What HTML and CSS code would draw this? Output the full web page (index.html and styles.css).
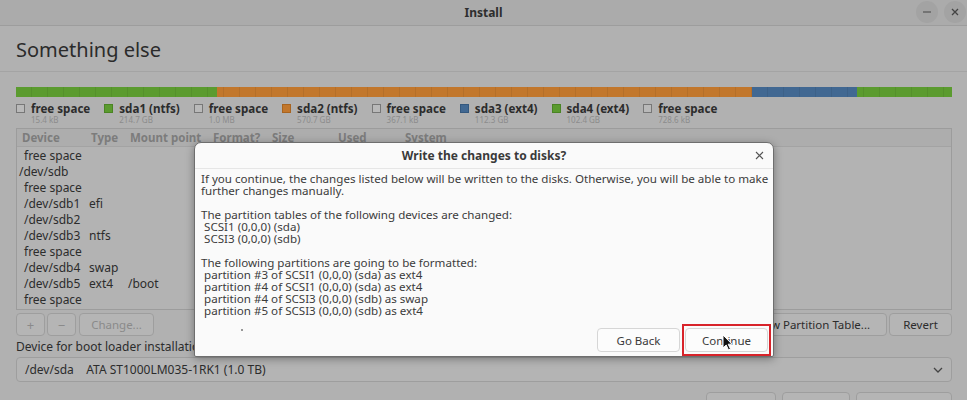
FILE: index.html
```html
<!DOCTYPE html>
<html>
<head>
<meta charset="utf-8">
<link rel="stylesheet" href="styles.css">
</head>
<body>
<div class="window">
  <header class="titlebar">
    <span class="title">Install</span>
    <div class="wm">
      <span class="wm-btn"><svg width="10" height="10" viewBox="0 0 10 10"><path d="M1 5h8" stroke="#555" stroke-width="1.2"/></svg></span>
      <span class="wm-btn"><svg width="10" height="10" viewBox="0 0 10 10"><path d="M2 2l6 6M8 2l-6 6" stroke="#444" stroke-width="1.3"/></svg></span>
    </div>
  </header>
  <div class="heading">Something else</div>
  <div class="content">
    <div class="partbar">
      <span class="seg green" style="width:201px"></span>
      <span class="seg orange" style="width:535px"></span>
      <span class="seg blue" style="width:105px"></span>
      <span class="seg green" style="flex:1"></span>
    </div>
    <div class="legend">
      <div class="lg"><span class="sq free"></span><div><div class="lg-name">free space</div><div class="lg-size">15.4 kB</div></div></div>
      <div class="lg"><span class="sq green"></span><div><div class="lg-name">sda1 (ntfs)</div><div class="lg-size">214.7 GB</div></div></div>
      <div class="lg"><span class="sq free"></span><div><div class="lg-name">free space</div><div class="lg-size">1.0 MB</div></div></div>
      <div class="lg"><span class="sq orange"></span><div><div class="lg-name">sda2 (ntfs)</div><div class="lg-size">570.7 GB</div></div></div>
      <div class="lg"><span class="sq free"></span><div><div class="lg-name">free space</div><div class="lg-size">367.1 kB</div></div></div>
      <div class="lg"><span class="sq blue"></span><div><div class="lg-name">sda3 (ext4)</div><div class="lg-size">112.3 GB</div></div></div>
      <div class="lg"><span class="sq green"></span><div><div class="lg-name">sda4 (ext4)</div><div class="lg-size">102.4 GB</div></div></div>
      <div class="lg"><span class="sq free"></span><div><div class="lg-name">free space</div><div class="lg-size">728.6 kB</div></div></div>
    </div>
    <div class="table">
      <div class="row head"><span>Device</span><span>Type</span><span>Mount point</span><span>Format?</span><span>Size</span><span>Used</span><span>System</span></div>
      <div class="row"><span class="ind">free space</span><span></span><span></span></div>
      <div class="row"><span>/dev/sdb</span><span></span><span></span></div>
      <div class="row"><span class="ind">free space</span><span></span><span></span></div>
      <div class="row"><span class="ind">/dev/sdb1</span><span>efi</span><span></span></div>
      <div class="row"><span class="ind">/dev/sdb2</span><span></span><span></span></div>
      <div class="row"><span class="ind">/dev/sdb3</span><span>ntfs</span><span></span></div>
      <div class="row"><span class="ind">free space</span><span></span><span></span></div>
      <div class="row"><span class="ind">/dev/sdb4</span><span>swap</span><span></span></div>
      <div class="row"><span class="ind">/dev/sdb5</span><span>ext4</span><span>/boot</span></div>
      <div class="row"><span class="ind">free space</span><span></span><span></span></div>
    </div>
    <div class="actions">
      <div class="group">
        <span class="btn sm dis">+</span>
        <span class="btn sm dis">−</span>
        <span class="btn change dis">Change...</span>
      </div>
      <div class="group">
        <span class="btn newpt">New Partition Table...</span>
        <span class="btn revert">Revert</span>
      </div>
    </div>
    <div class="boot-label">Device for boot loader installation:</div>
    <div class="combo">
      <span>/dev/sda&nbsp;&nbsp;&nbsp;&nbsp;ATA ST1000LM035-1RK1 (1.0 TB)</span>
      <svg width="10" height="6" viewBox="0 0 10 6"><path d="M1 1l4 4 4-4" fill="none" stroke="#444" stroke-width="1.3"/></svg>
    </div>
    <div class="footer">
      <span class="btn fb1"></span>
      <span class="btn fb2"></span>
      <span class="btn fb3"></span>
    </div>
  </div>
</div>

<div class="dialog">
  <div class="dlg-title">
    <span>Write the changes to disks?</span>
    <svg class="dlg-close" width="9" height="9" viewBox="0 0 9 9"><path d="M1 1l7 7M8 1l-7 7" stroke="#555" stroke-width="1.1"/></svg>
  </div>
  <div class="dlg-body">If you continue, the changes listed below will be written to the disks. Otherwise, you will be able to make
further changes manually.

The partition tables of the following devices are changed:
 SCSI1 (0,0,0) (sda)
 SCSI3 (0,0,0) (sdb)

The following partitions are going to be formatted:
 partition #3 of SCSI1 (0,0,0) (sda) as ext4
 partition #4 of SCSI1 (0,0,0) (sda) as ext4
 partition #4 of SCSI3 (0,0,0) (sdb) as swap
 partition #5 of SCSI3 (0,0,0) (sdb) as ext4</div>
  <span class="dot"></span>
  <div class="dlg-buttons">
    <span class="dbtn">Go Back</span>
    <span class="hl"><span class="dbtn cont">Continue</span></span>
  </div>
</div>
<svg class="cursor" width="12" height="17" viewBox="0 0 12 17"><path d="M1 1v13l3.2-3 2.3 5 2-1-2.3-4.8H10z" fill="#111" stroke="#fff" stroke-width="1"/></svg>
</body>
</html>
```
FILE: styles.css
```css
html, body {
  margin: 0;
  padding: 0;
}
body {
  width: 967px;
  height: 400px;
  overflow: hidden;
  position: relative;
  background: #b1b1b1;
  font-family: "Noto Sans", "DejaVu Sans", sans-serif;
  color: #2c2c2c;
}
.window {
  display: flex;
  flex-direction: column;
  height: 400px;
}
.titlebar {
  height: 25px;
  flex: none;
  background: #ababab;
  border-bottom: 1px solid #9d9d9d;
  display: flex;
  align-items: center;
  justify-content: center;
  position: relative;
}
.title {
  font-size: 12px;
  font-weight: 700;
  color: #2e2e2e;
}
.wm {
  position: absolute;
  right: 1px;
  top: 1px;
  display: flex;
  gap: 6px;
}
.wm-btn {
  width: 22px;
  height: 22px;
  border-radius: 50%;
  background: #a3a3a3;
  display: flex;
  align-items: center;
  justify-content: center;
}
.heading {
  height: 46px;
  flex: none;
  border-bottom: 1px solid #a4a4a4;
  font-size: 20px;
  padding-left: 16px;
  line-height: 48px;
  color: #2b2b2b;
  box-sizing: border-box;
}
.content {
  padding: 15px 15px 0 16px;
  display: flex;
  flex-direction: column;
}
.partbar {
  height: 10px;
  display: flex;
  position: relative;
}
.partbar::after {
  content: "";
  position: absolute;
  inset: 0;
  background: repeating-linear-gradient(90deg, transparent 0 15px, rgba(0,0,0,0.07) 15px 16px);
}
.seg { display: block; height: 100%; }
.green { background: #5b9b2f; }
.orange { background: #c2772c; }
.blue { background: #416892; }
.legend {
  display: flex;
  gap: 14px;
  margin-top: 6px;
  height: 25px;
}
.lg {
  display: flex;
  gap: 6px;
  align-items: flex-start;
}
.sq {
  width: 9px;
  height: 9px;
  box-sizing: border-box;
  margin-top: 1px;
  flex: none;
}
.sq.free { border: 1px solid #777; background: #b9b9b9; }
.sq.green { border: 1px solid #4a8424; }
.sq.orange { border: 1px solid #a86420; }
.sq.blue { border: 1px solid #34587e; }
.lg-name {
  font-size: 11.6px;
  font-weight: 700;
  line-height: 12px;
  color: #2c2c2c;
}
.lg-size {
  font-size: 8px;
  line-height: 9px;
  color: #8c8c8c;
}
.table {
  border: 1px solid #9c9c9c;
  background: #b3b3b3;
  height: 180px;
}
.row {
  display: grid;
  grid-template-columns: 70px 39px 83px 59px 66px 67px 1fr;
  height: 16px;
  align-items: center;
  font-size: 12px;
  padding-left: 2px;
}
.row span { white-space: nowrap; }
.row .ind { padding-left: 5px; }
.row.head {
  height: 17px;
  grid-template-columns: 69px 39px 83px 59px 66px 67px 1fr;
  background: #adadad;
  border-bottom: 1px solid #a3a3a3;
  color: #7c7c7c;
  font-weight: 700;
  font-size: 11.5px;
  padding-left: 5px;
}
.actions {
  display: flex;
  justify-content: space-between;
  margin-top: 3px;
}
.group {
  display: flex;
  gap: 2px;
}
.btn {
  height: 23px;
  box-sizing: border-box;
  border: 1px solid #9e9e9e;
  border-radius: 4px;
  background: #b5b5b5;
  font-size: 11.5px;
  display: flex;
  align-items: center;
  justify-content: center;
  color: #2c2c2c;
}
.btn.dis { color: #8a8a8a; }
.btn.sm { width: 29px; font-size: 13px; }
.btn.change { width: 75px; margin-left: 1px; }
.btn.newpt { width: 148px; }
.btn.revert { width: 63px; }
.boot-label {
  font-size: 12px;
  margin-top: 4px;
  line-height: 14px;
  color: #2c2c2c;
}
.combo {
  margin-top: 3px;
  height: 23px;
  border: 1px solid #9e9e9e;
  border-radius: 4px;
  background: #b4b4b4;
  display: flex;
  align-items: center;
  justify-content: space-between;
  padding: 0 8px 0 8px;
  font-size: 12px;
}
.footer {
  display: flex;
  justify-content: flex-end;
  gap: 6px;
  margin-top: 10px;
}
.footer .btn { height: 26px; }
.fb1 { width: 70px; }
.fb2 { width: 68px; }
.fb3 { width: 96px; }

.dialog {
  position: absolute;
  left: 194px;
  top: 142px;
  width: 580px;
  height: 215px;
  box-sizing: border-box;
  background: #fafafa;
  border: 1px solid #6e6e6e;
  border-radius: 7px 7px 2px 2px;
  box-shadow: 0 2px 8px rgba(0,0,0,0.35);
  display: flex;
  flex-direction: column;
}
.dlg-title {
  height: 25px;
  flex: none;
  border-bottom: 1px solid #e6e6e6;
  display: flex;
  align-items: center;
  justify-content: center;
  position: relative;
  font-size: 12px;
  font-weight: 700;
  color: #3a3a3a;
}
.dlg-close {
  position: absolute;
  right: 9px;
  top: 8px;
}
.dlg-body {
  white-space: pre;
  font-size: 11.6px;
  line-height: 12px;
  color: #3c3c3c;
  padding: 4px 0 0 6px;
}
.dot {
  position: absolute;
  left: 46px;
  top: 186px;
  width: 2px;
  height: 2px;
  background: #777;
  border-radius: 50%;
}
.dlg-buttons {
  position: absolute;
  right: 2px;
  bottom: 0;
  display: flex;
  align-items: center;
  gap: 2px;
}
.dbtn {
  height: 24px;
  box-sizing: border-box;
  border: 1px solid #d6d6d6;
  border-radius: 4px;
  background: #fcfcfc;
  font-size: 11.5px;
  color: #3a3a3a;
  display: flex;
  align-items: center;
  justify-content: center;
  width: 83px;
}
.hl {
  border: 2px solid #d8232a;
  padding: 2px 1px;
  display: flex;
}
.cursor {
  position: absolute;
  left: 722px;
  top: 334px;
}
```
